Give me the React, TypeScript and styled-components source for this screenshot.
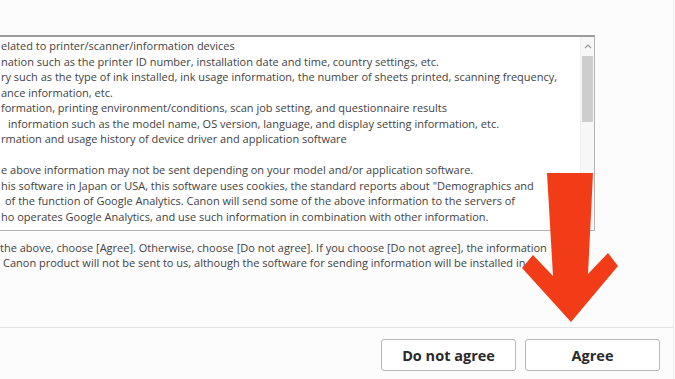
import React from "react";
import styled, { createGlobalStyle } from "styled-components";

const GlobalStyle = createGlobalStyle`
  html, body {
    margin: 0;
    padding: 0;
    background: #fcfcfc;
  }
  #root {
    width: 675px;
    height: 379px;
    overflow: hidden;
  }
`;

const infoLines: { text: string; shift?: number; blank?: boolean }[] = [
  { text: "elated to printer/scanner/information devices" },
  { text: "nation such as the printer ID number, installation date and time, country settings, etc." },
  { text: "ry such as the type of ink installed, ink usage information, the number of sheets printed, scanning frequency," },
  { text: "ance information, etc." },
  { text: "formation, printing environment/conditions, scan job setting, and questionnaire results" },
  { text: "information such as the model name, OS version, language, and display setting information, etc.", shift: 7 },
  { text: "rmation and usage history of device driver and application software" },
  { text: "", blank: true },
  { text: "e above information may not be sent depending on your model and/or application software." },
  { text: "his software in Japan or USA, this software uses cookies, the standard reports about \"Demographics and" },
  { text: "of the function of Google Analytics. Canon will send some of the above information to the servers of", shift: 4 },
  { text: "ho operates Google Analytics, and use such information in combination with other information." },
];

const App = () => (
  <>
    <GlobalStyle />
    <Window>
      <Body>
        <TextBox>
          <TextContent>
            {infoLines.map((l, i) => (
              <Line key={i} $shift={l.shift ?? 0}>
                {l.blank ? "\u00a0" : l.text}
              </Line>
            ))}
          </TextContent>
          <Scrollbar>
            <ScrollArrow>
              <svg width="8" height="5" viewBox="0 0 8 5">
                <path d="M1 4 L4 1 L7 4" fill="none" stroke="#9a9a9a" strokeWidth="1.2" />
              </svg>
            </ScrollArrow>
            <ScrollThumb />
          </Scrollbar>
        </TextBox>
        <Notice>
          <Line $shift={0}>
            the above, choose [Agree]. Otherwise, choose [Do not agree]. If you choose [Do not agree], the information
          </Line>
          <Line $shift={3}>
            Canon product will not be sent to us, although the software for sending information will be installed in
          </Line>
        </Notice>
      </Body>
      <Footer>
        <Button>Do not agree</Button>
        <Button>Agree</Button>
      </Footer>
      <Arrow width="675" height="379" viewBox="0 0 675 379">
        <polygon
          points="547,173 593,173 588,274 608,253 618,266 571,322 522,268 533,255 553,276"
          fill="#f23c17"
        />
      </Arrow>
    </Window>
  </>
);

export default App;

const Window = styled.div`
  position: relative;
  width: 673px;
  height: 379px;
  display: flex;
  flex-direction: column;
  border-right: 1px solid #ececec;
  background: #fcfcfc;
  font-family: "Open Sans", "Noto Sans", sans-serif;
  color: #424242;
`;

const Body = styled.div`
  flex: 1;
  display: flex;
  flex-direction: column;
  padding-top: 35px;
  padding-right: 78px;
  margin-left: -10px;
`;

const TextBox = styled.div`
  height: 193px;
  display: flex;
  background: #ffffff;
  border: 1px solid #b4b4b4;
  border-top: 2px solid #9c9c9c;
`;

const TextContent = styled.div`
  flex: 1;
  overflow: hidden;
  padding: 1px 0 0 10px;
  font-size: 11px;
  line-height: 15.5px;
`;

const Line = styled.div<{ $shift: number }>`
  white-space: nowrap;
  margin-left: ${(p) => p.$shift}px;
`;

const Scrollbar = styled.div`
  width: 13px;
  display: flex;
  flex-direction: column;
  align-items: center;
  background: #f7f7f7;
  border-left: 1px solid #f0f0f0;
`;

const ScrollArrow = styled.div`
  height: 19px;
  display: flex;
  align-items: center;
  justify-content: center;
`;

const ScrollThumb = styled.div`
  width: 11px;
  height: 66px;
  background: #cdcdcd;
`;

const Notice = styled.div`
  padding: 9px 0 0 10px;
  font-size: 11px;
  line-height: 15px;
  overflow: hidden;
  margin-right: -78px;
`;

const Footer = styled.div`
  height: 52px;
  box-sizing: border-box;
  display: flex;
  justify-content: flex-end;
  align-items: flex-start;
  gap: 9px;
  padding: 11px 13px 0 0;
  border-top: 1px solid #e3e3e3;
`;

const Button = styled.button`
  width: 135px;
  height: 32px;
  background: #ffffff;
  border: 1px solid #b9b9b9;
  border-radius: 3px;
  font-family: "Open Sans", "Noto Sans", sans-serif;
  font-weight: 700;
  font-size: 14.5px;
  color: #2a2a2a;
`;

const Arrow = styled.svg`
  position: absolute;
  left: 0;
  top: 0;
  pointer-events: none;
`;
